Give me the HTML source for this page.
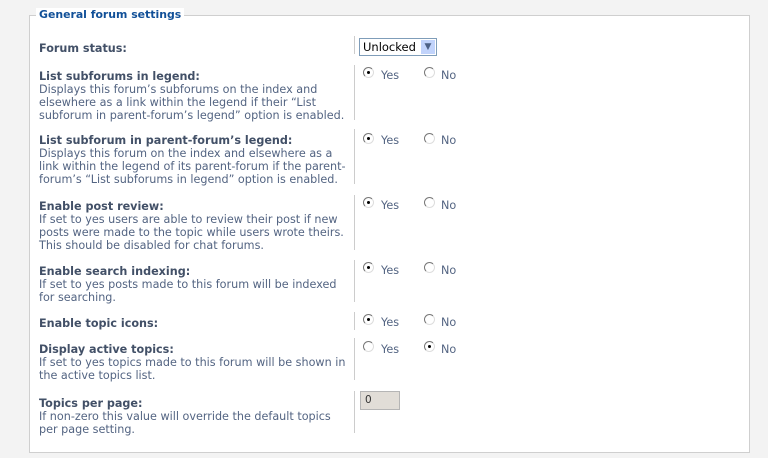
<!DOCTYPE html>
<html><head><meta charset="utf-8"><style>
body{margin:0;width:768px;height:458px;background:#f3f3f3;position:relative;overflow:hidden;font-family:"DejaVu Sans","Liberation Sans",sans-serif;}
.box{position:absolute;left:29px;top:15px;width:719px;height:436px;background:#fff;border:1px solid #cfcfcf;}
.leg{position:absolute;left:36px;top:8px;background:#fff;padding:0 3px;color:#115098;font-weight:bold;font-size:10.9px;}
.r{position:absolute;left:39px;width:330px;font-size:11.2px;line-height:13px;color:#536482;white-space:nowrap;}
.r b{color:#425067;display:block;font-size:11.2px;}
.div{position:absolute;left:354px;width:1px;background:#ccc;}
.rad{position:absolute;width:9px;height:9px;border-radius:50%;border:1px solid #888;border-color:#777 #ddd #ddd #777;background:#fff;}
.rad.on::after{content:"";position:absolute;left:3px;top:3px;width:3px;height:3px;background:#000;border-radius:50%;}
.t{position:absolute;font-size:11.2px;color:#536482;}
</style></head><body>
<div class="box"></div>
<div class="leg">General forum settings</div>

<div class="r" style="top:42px"><b>Forum status:</b></div>
<div class="div" style="top:36px;height:18px"></div>
<div style="position:absolute;left:359px;top:38px;height:18px;width:78px;border:1px solid #7f9db9;background:#fff;font-size:11.5px;color:#000;line-height:16px;padding-left:3px;box-sizing:border-box;">Unlocked<span style="position:absolute;right:1px;top:1px;width:14px;height:14px;background:#c1d3fb;color:#4d6185;font-size:9px;text-align:center;line-height:14px">▼</span></div>

<div class="r" style="top:70px"><b>List subforums in legend:</b>Displays this forum’s subforums on the index and<br>elsewhere as a link within the legend if their “List<br>subforum in parent-forum’s legend” option is enabled.</div>
<div class="div" style="top:65px;height:55px"></div>

<div class="r" style="top:134px"><b>List subforum in parent-forum’s legend:</b>Displays this forum on the index and elsewhere as a<br>link within the legend of its parent-forum if the parent-<br>forum’s “List subforums in legend” option is enabled.</div>
<div class="div" style="top:129px;height:55px"></div>

<div class="r" style="top:200px"><b>Enable post review:</b>If set to yes users are able to review their post if new<br>posts were made to the topic while users wrote theirs.<br>This should be disabled for chat forums.</div>
<div class="div" style="top:195px;height:55px"></div>

<div class="r" style="top:265px"><b>Enable search indexing:</b>If set to yes posts made to this forum will be indexed<br>for searching.</div>
<div class="div" style="top:260px;height:42px"></div>

<div class="r" style="top:317px"><b>Enable topic icons:</b></div>
<div class="div" style="top:312px;height:18px"></div>

<div class="r" style="top:343px"><b>Display active topics:</b>If set to yes topics made to this forum will be shown in<br>the active topics list.</div>
<div class="div" style="top:338px;height:42px"></div>

<div class="r" style="top:397px"><b>Topics per page:</b>If non-zero this value will override the default topics<br>per page setting.</div>
<div class="div" style="top:391px;height:42px"></div>
<div style="position:absolute;left:360px;top:391px;width:40px;height:19px;background:#e1ddd7;border:1px solid #b5b5b5;box-sizing:border-box;font-size:10.5px;color:#333;line-height:17px;padding-left:4px">0</div>

<div class="rad on" style="left:363px;top:67px"></div><div class="t" style="left:381px;top:69px">Yes</div>
<div class="rad" style="left:424px;top:67px"></div><div class="t" style="left:441px;top:69px">No</div>
<div class="rad on" style="left:363px;top:133px"></div><div class="t" style="left:381px;top:134px">Yes</div>
<div class="rad" style="left:424px;top:133px"></div><div class="t" style="left:441px;top:134px">No</div>
<div class="rad on" style="left:363px;top:197px"></div><div class="t" style="left:381px;top:199px">Yes</div>
<div class="rad" style="left:424px;top:197px"></div><div class="t" style="left:441px;top:199px">No</div>
<div class="rad on" style="left:363px;top:262px"></div><div class="t" style="left:381px;top:264px">Yes</div>
<div class="rad" style="left:424px;top:262px"></div><div class="t" style="left:441px;top:264px">No</div>
<div class="rad on" style="left:363px;top:314px"></div><div class="t" style="left:381px;top:316px">Yes</div>
<div class="rad" style="left:424px;top:314px"></div><div class="t" style="left:441px;top:316px">No</div>
<div class="rad" style="left:363px;top:341px"></div><div class="t" style="left:381px;top:343px">Yes</div>
<div class="rad on" style="left:424px;top:341px"></div><div class="t" style="left:441px;top:343px">No</div>
</body></html>
